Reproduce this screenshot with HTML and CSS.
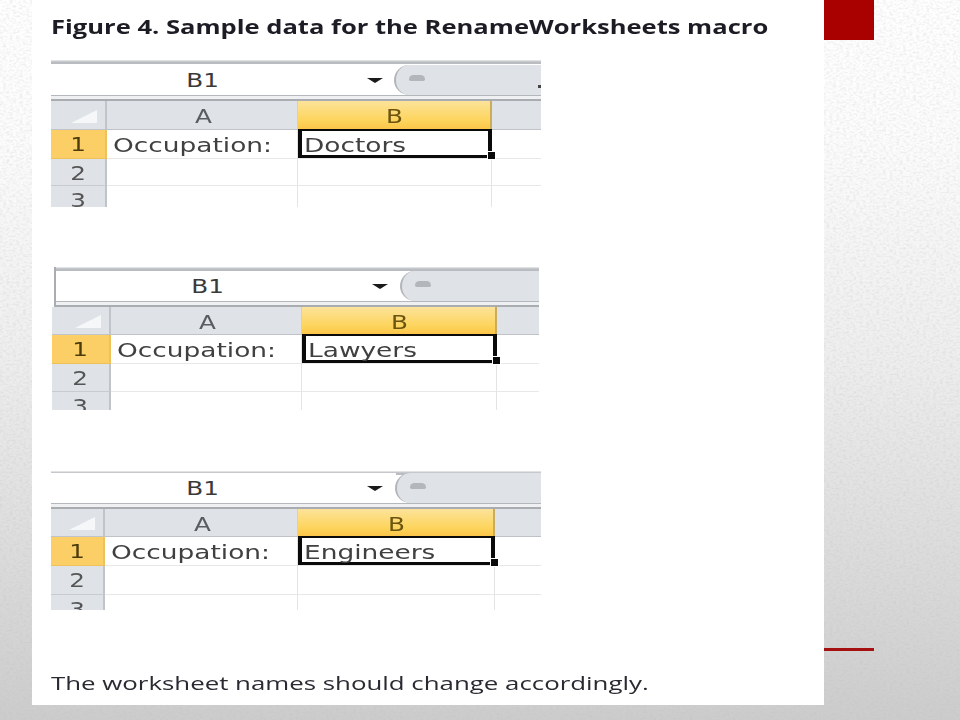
FILE: index.html
```html
<!DOCTYPE html>
<html lang="en">
<head>
<meta charset="utf-8">
<title>Sample data for the RenameWorksheets macro</title>
<link rel="stylesheet" href="styles.css">
</head>
<body>
<main class="slide">
  <article class="card">
    <h1 class="title"><span class="wide">Figure 4. Sample data for the RenameWorksheets macro</span></h1>

    <section class="sheet sheet-one">
      <div class="formula">
        <div class="namebox"><span class="name"><span class="wide-c">B1</span></span><span class="arrow"></span></div>
        <div class="pill"><span class="bump"></span><span class="dot"></span></div>
      </div>
      <div class="grid">
        <div class="corner"></div><div class="col-head"><span class="wide-c">A</span></div><div class="col-head active"><span class="wide-c">B</span></div><div class="col-head"></div>
        <div class="row-head active"><span class="wide-c">1</span></div><div class="cell"><span class="wide">Occupation:</span></div><div class="cell selected"><span class="wide">Doctors</span></div><div class="cell"></div>
        <div class="row-head"><span class="wide-c">2</span></div><div class="cell"></div><div class="cell"></div><div class="cell"></div>
        <div class="row-head"><span class="wide-c">3</span></div><div class="cell"></div><div class="cell"></div><div class="cell"></div>
      </div>
    </section>

    <section class="sheet sheet-two">
      <div class="formula">
        <div class="namebox"><span class="name"><span class="wide-c">B1</span></span><span class="arrow"></span></div>
        <div class="pill"><span class="bump"></span></div>
      </div>
      <div class="grid">
        <div class="corner"></div><div class="col-head"><span class="wide-c">A</span></div><div class="col-head active"><span class="wide-c">B</span></div><div class="col-head"></div>
        <div class="row-head active"><span class="wide-c">1</span></div><div class="cell"><span class="wide">Occupation:</span></div><div class="cell selected"><span class="wide">Lawyers</span></div><div class="cell"></div>
        <div class="row-head"><span class="wide-c">2</span></div><div class="cell"></div><div class="cell"></div><div class="cell"></div>
        <div class="row-head"><span class="wide-c">3</span></div><div class="cell"></div><div class="cell"></div><div class="cell"></div>
      </div>
    </section>

    <section class="sheet sheet-three">
      <div class="formula">
        <div class="namebox"><span class="name"><span class="wide-c">B1</span></span><span class="arrow"></span></div>
        <div class="pill"><span class="bump"></span></div>
      </div>
      <div class="grid">
        <div class="corner"></div><div class="col-head"><span class="wide-c">A</span></div><div class="col-head active"><span class="wide-c">B</span></div><div class="col-head"></div>
        <div class="row-head active"><span class="wide-c">1</span></div><div class="cell"><span class="wide">Occupation:</span></div><div class="cell selected"><span class="wide">Engineers</span></div><div class="cell"></div>
        <div class="row-head"><span class="wide-c">2</span></div><div class="cell"></div><div class="cell"></div><div class="cell"></div>
        <div class="row-head"><span class="wide-c">3</span></div><div class="cell"></div><div class="cell"></div><div class="cell"></div>
      </div>
    </section>

    <p class="note"><span class="wide">The worksheet names should change accordingly.</span></p>
  </article>

  <aside class="accents">
    <div class="accent-block"></div>
    <div class="accent-line"></div>
  </aside>
</main>
</body>
</html>
```

FILE: styles.css
```css
* { box-sizing: border-box; }

html, body {
  margin: 0;
  width: 960px;
  height: 720px;
  overflow: hidden;
}

body {
  font-family: "Open Sans", "DejaVu Sans", sans-serif;
  background-color: #e4e4e4;
  background-image:
    url("data:image/svg+xml,%3Csvg xmlns='http://www.w3.org/2000/svg' width='960' height='720'%3E%3Cfilter id='n' x='0' y='0' width='100%25' height='100%25'%3E%3CfeTurbulence type='fractalNoise' baseFrequency='0.3 0.5' numOctaves='3' seed='4'/%3E%3CfeColorMatrix values='0 0 0 0 0.5 0 0 0 0 0.5 0 0 0 0 0.5 0.6 0 0 0 -0.24'/%3E%3C/filter%3E%3Crect width='960' height='720' filter='url(%23n)'/%3E%3C/svg%3E"),
    linear-gradient(to bottom, #ffffff 0%, #fcfcfc 20%, #eeeeee 50%, #dadada 80%, #cccccc 100%);
}

.slide {
  display: flex;
  align-items: flex-start;
  padding-left: 32px;
}

.card {
  width: 792px;
  height: 705px;
  background: #fff;
  padding-top: 14px;
  display: flex;
  flex-direction: column;
  overflow: hidden;
}

.wide, .wide-c {
  display: inline-block;
  white-space: nowrap;
}
.wide { transform-origin: left center; }
.wide-c { transform-origin: center; transform: scaleX(1.3); }

.title {
  margin: 0 0 0 19px;
  height: 26px;
  font-size: 19px;
  line-height: 26px;
  font-weight: 700;
  color: #1c1c24;
  filter: blur(0.4px);
}
.title .wide { transform: scaleX(1.345); }

.accents {
  width: 50px;
  display: flex;
  flex-direction: column;
}
.accent-block { height: 40px; background: #a90000; }
.accent-line { height: 2.5px; margin-top: 608px; background: #a51010; }

/* spreadsheet crop */
.sheet {
  display: flex;
  flex-direction: column;
  overflow: hidden;
  filter: blur(0.6px);
  font-family: "DejaVu Sans", sans-serif;
  font-size: 20px;
  color: #404040;
}
.sheet-one   { margin: 20px 0 0 19px; width: 490px; height: 147px; --name: 344px; --formula: 41px; --name-y: 5px; --shift: 0px; }
.sheet-two   { margin: 60px 0 0 20px; width: 487px; height: 143px; --name: 345px; --formula: 40px; --name-y: 4px; --shift: 2px; }
.sheet-three { margin: 61px 0 0 19px; width: 490px; height: 139px; --name: 345px; --formula: 38px; --name-y: 2px; --shift: 0px; }

.formula {
  height: var(--formula);
  flex: none;
  margin-left: var(--shift);
  display: flex;
  align-items: stretch;
  padding-top: var(--name-y);
  padding-bottom: 6px;
  background: linear-gradient(to bottom, #eceef0 0, #b9bcc0 2px, #b9bcc0 4px, transparent 4px),
              linear-gradient(to top, #a9adb2 0, #a9adb2 2px, #eef0f2 2px, #eef0f2 5px, #b4b7bb 5px, #b4b7bb 6px, transparent 6px);
  background-color: #fff;
}
.sheet-two .formula { border-left: 2px solid #a9adb2; }

.namebox {
  width: var(--name);
  flex: none;
  display: flex;
  align-items: center;
  background: #fff;
  position: relative;
}
.name {
  width: 304px;
  text-align: center;
  font-size: 19px;
  color: #3a3a3a;
}
.arrow {
  width: 0;
  height: 0;
  margin-left: 12px;
  border-left: 8px solid transparent;
  border-right: 8px solid transparent;
  border-top: 5px solid #1a1a1a;
}
.pill {
  flex: 1;
  position: relative;
  background: #dfe2e6;
  border-left: 2px solid #b2b5b9;
  border-radius: 16px 0 0 16px;
  margin-left: -1px;
}
.bump {
  position: absolute;
  left: 13px;
  top: 10px;
  width: 16px;
  height: 6px;
  border-radius: 8px 8px 3px 3px;
  background: #b3b6ba;
}
.dot {
  position: absolute;
  right: 0;
  top: 20px;
  width: 3px;
  height: 3px;
  background: #444;
}

.grid { display: grid; flex: none; }
.sheet-one .grid   { grid-template-columns: 56px 191px 194px 49px; grid-template-rows: 29px 29px 27px 21px; }
.sheet-two .grid   { grid-template-columns: 59px 191px 195px 42px; grid-template-rows: 28px 29px 28px 19px; }
.sheet-three .grid { grid-template-columns: 54px 193px 197px 46px; grid-template-rows: 28px 29px 29px 15px; }

.corner, .col-head, .row-head {
  background: #dfe3e7;
  text-align: center;
  overflow: hidden;
}
.corner {
  position: relative;
  border-right: 2px solid #c0c3c7;
  border-bottom: 1px solid #c0c3c7;
}
.corner::after {
  content: "";
  position: absolute;
  right: 8px;
  bottom: 6px;
  width: 26px;
  height: 13px;
  background: #f6f7f8;
  clip-path: polygon(100% 0, 100% 100%, 0 100%);
}
.col-head {
  font-size: 19px;
  line-height: 31px;
  padding-left: 2px;
  color: #5a5d60;
  border-right: 1px solid #cdd0d4;
  border-bottom: 1px solid #bfc2c6;
}
.col-head.active {
  background: linear-gradient(to bottom, #fce39a 0%, #fdd45c 70%, #fbc64a 100%);
  color: #6b5410;
  border-right: 2px solid #c9ac5c;
  border-bottom-color: #c9ac5c;
}
.col-head:nth-child(4) { border-right: 0; }
.row-head {
  line-height: 29px;
  font-size: 19px;
  color: #555;
  border-right: 2px solid #c0c3c7;
  border-bottom: 1px solid #c8cbcf;
}
.row-head.active {
  background: #fbcf66;
  color: #4d3c0b;
  border-right-color: #eec25a;
  border-bottom-color: #eec25a;
}
.cell {
  position: relative;
  padding-left: 6px;
  line-height: 30px;
  background: #fff;
  border-right: 1px solid #e4e4e4;
  border-bottom: 1px solid #e8e8e8;
}
.cell .wide { transform: scaleX(1.32); }
.cell.selected::before {
  content: "";
  position: absolute;
  inset: -1px -1px 0 0;
  border: solid #0a0a0a;
  border-width: 2px 4px 3px 4px;
}
.cell.selected::after {
  content: "";
  position: absolute;
  right: -5px;
  bottom: -2px;
  width: 7px;
  height: 7px;
  background: #0a0a0a;
  border: 1px solid #fff;
  z-index: 1;
}
.cell:nth-child(4n) { border-right: 0; }
.grid > :nth-child(n+13) { border-bottom: 0; }

.note {
  margin: 60px 0 0 19px;
  font-size: 19px;
  line-height: 26px;
  color: #2a2a32;
  filter: blur(0.4px);
}
.note .wide { transform: scaleX(1.36); }
```
